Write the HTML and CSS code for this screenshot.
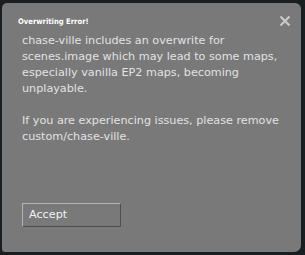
FILE: index.html
```html
<!DOCTYPE html>
<html lang="en">
<head>
    <meta charset="UTF-8">
    <title>Overwriting Error!</title>
    <link rel="stylesheet" href="styles.css">
</head>
<body>
    <div class="dialog">
        <div class="titlebar">
            <p class="title">Overwriting Error!</p>
            <span class="close">
                <svg width="12" height="12" viewBox="0 0 12 12">
                    <path d="M1.5 1.5 L10.5 10.5 M10.5 1.5 L1.5 10.5" stroke="#c9c9c9" stroke-width="2.2"/>
                </svg>
            </span>
        </div>
        <div class="message">
            <p>chase-ville includes an overwrite for<br>scenes.image which may lead to some maps,<br>especially vanilla EP2 maps, becoming<br>unplayable.</p>
            <p>If you are experiencing issues, please remove<br>custom/chase-ville.</p>
        </div>
        <div class="actions">
            <button class="accept">Accept</button>
        </div>
    </div>
</body>
</html>
```

FILE: styles.css
```css
*{
    padding: 0;
    margin: 0;
}
body{
    background-color: #1b1e21;
    width: 305px;
    height: 255px;
    overflow: hidden;
}
.dialog{
    width: 299px;
    height: 249px;
    margin: 3px 0 0 2px;
    background-color: #797979;
    border-radius: 5px 6px 7px 3px;
    display: flex;
    flex-direction: column;
    font-family: "DejaVu Sans", sans-serif;
}
/* 标题栏 */
.titlebar{
    display: flex;
    justify-content: space-between;
    align-items: center;
    padding: 8px 10px 0 16px;
    height: 20px;
}
.title{
    color: #ffffff;
    font-family: "DejaVu Sans Condensed", "DejaVu Sans", sans-serif;
    font-size: 7.6px;
    font-weight: bold;
}
.close{
    display: flex;
    margin-top: -1px;
}
/* 提示内容 */
.message{
    color: #e2e2e2;
    font-size: 11.2px;
    line-height: 16px;
    padding: 2px 0 0 20px;
    flex-grow: 1;
}
.message p{
    margin-bottom: 16px;
}
.actions{
    padding: 0 0 25px 20px;
}
.accept{
    width: 99px;
    height: 24px;
    background-color: #797979;
    color: #f2f2f2;
    font-family: "DejaVu Sans", sans-serif;
    font-size: 11.2px;
    text-align: left;
    padding: 0 0 1px 6px;
    border: 1px solid;
    border-color: #b4b4b4 #4e4e4e #4e4e4e #b4b4b4;
}
```
